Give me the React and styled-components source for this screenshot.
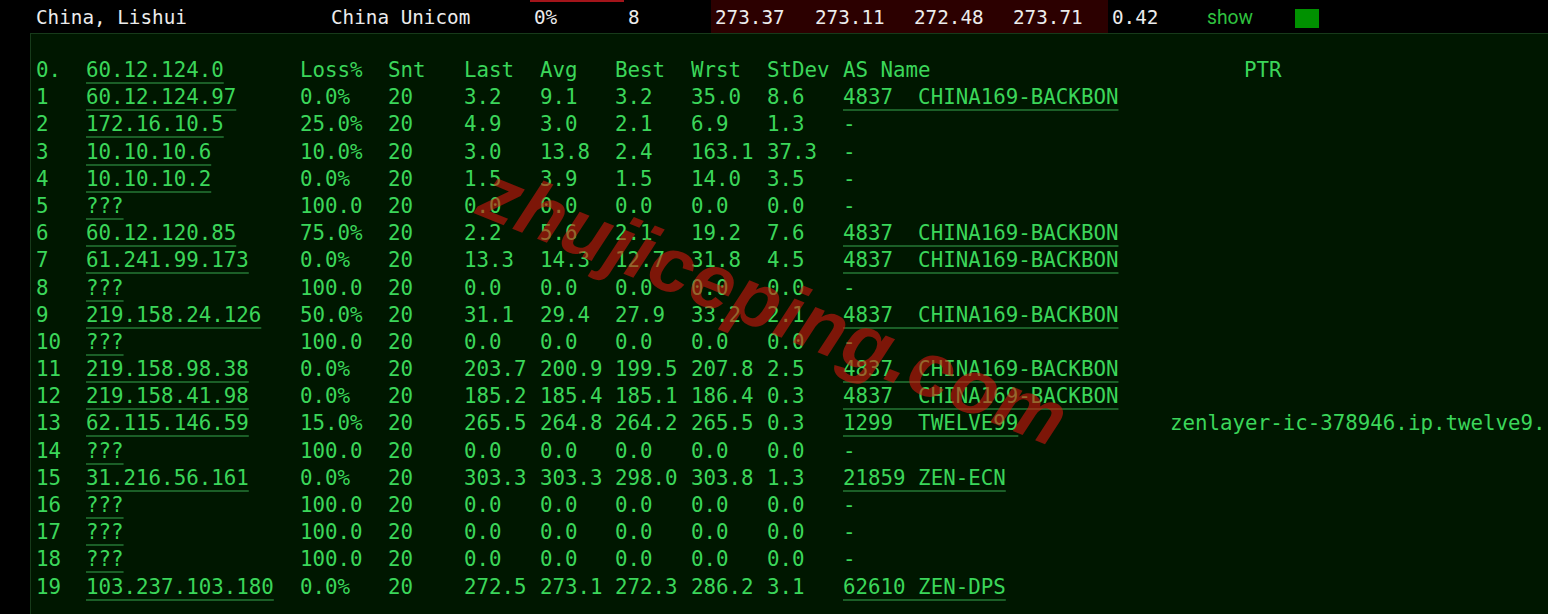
import React from "react";
import styled, { createGlobalStyle } from "styled-components";

const GlobalStyle = createGlobalStyle`
  html, body {
    margin: 0;
    padding: 0;
    background: #000;
    overflow: hidden;
  }
`;

const MONO = `"DejaVu Sans Mono", "Liberation Mono", monospace`;
const GREEN = "#3bd65a";

const Page = styled.div`
  width: 1548px;
  height: 614px;
  display: flex;
  flex-direction: column;
  background: #000;
  overflow: hidden;
  font-family: ${MONO};
`;

const TopBar = styled.div`
  height: 33px;
  flex-shrink: 0;
  display: grid;
  grid-template-columns: 32px 295px 203px 94px 87px 100px 99px 99px 99px 95px 88px 40px 1fr;
  align-items: stretch;
  font-size: 19.3px;
  color: #ececec;
`;

const Cell = styled.div`
  display: flex;
  align-items: center;
  padding-left: 4px;
  white-space: pre;
  background: ${(p) => (p.$hot ? "#2c0000" : "transparent")};
  color: ${(p) => (p.$link ? "#2fc23f" : "inherit")};
  border-top: 2px solid ${(p) => (p.$bar ? "#a3141a" : "transparent")};
  font-family: ${(p) => (p.$sans ? `Roboto, "Liberation Sans", sans-serif` : "inherit")};
`;

const StatusBox = styled.span`
  width: 24px;
  height: 19px;
  margin-top: 2px;
  background: #009100;
`;

const Body = styled.div`
  flex: 1;
  display: flex;
`;

const Gutter = styled.div`
  width: 30px;
  flex-shrink: 0;
`;

const Panel = styled.div`
  flex: 1;
  position: relative;
  background: #001700;
  border-left: 1px solid #173a1a;
  border-top: 1px solid #173a1a;
  padding: 23px 0 0 5px;
  overflow: hidden;
  color: ${GREEN};
  font-size: 20.8px;
`;

const Row = styled.div`
  display: grid;
  grid-template-columns: 50px 214px 88px 76px 76px 75px 76px 76px 76px 327px minmax(0, 1fr);
  height: 27.2px;
  line-height: 27.2px;
  white-space: pre;
`;

const Col = styled.span`
  padding-left: ${(p) => p.$indent || 0}px;
  overflow: hidden;
`;

const Link = styled.span`
  text-decoration: underline;
  text-decoration-color: #1b5f27;
  text-decoration-thickness: 2px;
  text-underline-offset: 5px;
`;

const Watermark = styled.div`
  position: absolute;
  left: 743px;
  top: 272px;
  transform: translate(-50%, -50%) rotate(22deg);
  font-family: "Liberation Sans", Arial, sans-serif;
  font-weight: 700;
  font-style: italic;
  font-size: 78px;
  letter-spacing: 1px;
  color: rgba(215, 22, 14, 0.58);
  white-space: nowrap;
  pointer-events: none;
`;

const AS_BB = "4837  CHINA169-BACKBON";
const LOST = ["???", "100.0", "20", "0.0", "0.0", "0.0", "0.0", "0.0", "-"];

const hops = [
  ["1", "60.12.124.97", "0.0%", "20", "3.2", "9.1", "3.2", "35.0", "8.6", AS_BB],
  ["2", "172.16.10.5", "25.0%", "20", "4.9", "3.0", "2.1", "6.9", "1.3", "-"],
  ["3", "10.10.10.6", "10.0%", "20", "3.0", "13.8", "2.4", "163.1", "37.3", "-"],
  ["4", "10.10.10.2", "0.0%", "20", "1.5", "3.9", "1.5", "14.0", "3.5", "-"],
  ["5", ...LOST],
  ["6", "60.12.120.85", "75.0%", "20", "2.2", "5.6", "2.1", "19.2", "7.6", AS_BB],
  ["7", "61.241.99.173", "0.0%", "20", "13.3", "14.3", "12.7", "31.8", "4.5", AS_BB],
  ["8", ...LOST],
  ["9", "219.158.24.126", "50.0%", "20", "31.1", "29.4", "27.9", "33.2", "2.1", AS_BB],
  ["10", ...LOST],
  ["11", "219.158.98.38", "0.0%", "20", "203.7", "200.9", "199.5", "207.8", "2.5", AS_BB],
  ["12", "219.158.41.98", "0.0%", "20", "185.2", "185.4", "185.1", "186.4", "0.3", AS_BB],
  ["13", "62.115.146.59", "15.0%", "20", "265.5", "264.8", "264.2", "265.5", "0.3", "1299  TWELVE99", "zenlayer-ic-378946.ip.twelve9."],
  ["14", ...LOST],
  ["15", "31.216.56.161", "0.0%", "20", "303.3", "303.3", "298.0", "303.8", "1.3", "21859 ZEN-ECN"],
  ["16", ...LOST],
  ["17", ...LOST],
  ["18", ...LOST],
  ["19", "103.237.103.180", "0.0%", "20", "272.5", "273.1", "272.3", "286.2", "3.1", "62610 ZEN-DPS"],
];

function HopRow({ hop }) {
  const [n, ip, loss, snt, last, avg, best, wrst, stdev, as, ptr] = hop;
  return (
    <Row>
      <Col>{n}</Col>
      <Col><Link>{ip}</Link></Col>
      <Col>{loss}</Col>
      <Col>{snt}</Col>
      <Col>{last}</Col>
      <Col>{avg}</Col>
      <Col>{best}</Col>
      <Col>{wrst}</Col>
      <Col>{stdev}</Col>
      <Col>{as === "-" ? as : <Link>{as}</Link>}</Col>
      <Col>{ptr || ""}</Col>
    </Row>
  );
}

export default function App() {
  return (
    <>
      <GlobalStyle />
      <Page>
        <TopBar>
          <span />
          <Cell>China, Lishui</Cell>
          <Cell>China Unicom</Cell>
          <Cell $bar>0%</Cell>
          <Cell>8</Cell>
          <Cell $hot>273.37</Cell>
          <Cell $hot>273.11</Cell>
          <Cell $hot>272.48</Cell>
          <Cell $hot>273.71</Cell>
          <Cell>0.42</Cell>
          <Cell $link $sans>show</Cell>
          <Cell><StatusBox /></Cell>
          <span />
        </TopBar>
        <Body>
          <Gutter />
          <Panel>
            <Row>
              <Col>0.</Col>
              <Col><Link>60.12.124.0</Link></Col>
              <Col>Loss%</Col>
              <Col>Snt</Col>
              <Col>Last</Col>
              <Col>Avg</Col>
              <Col>Best</Col>
              <Col>Wrst</Col>
              <Col>StDev</Col>
              <Col>AS Name</Col>
              <Col $indent={74}>PTR</Col>
            </Row>
            {hops.map((h) => (
              <HopRow key={h[0]} hop={h} />
            ))}
            <Watermark>zhujiceping.com</Watermark>
          </Panel>
        </Body>
      </Page>
    </>
  );
}
